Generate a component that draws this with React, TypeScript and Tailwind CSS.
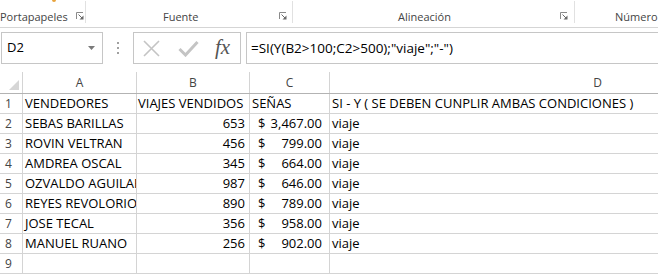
import React from "react";

const data: [string, string, string, string][] = [
  ["SEBAS BARILLAS", "653", "3,467.00", "viaje"],
  ["ROVIN VELTRAN", "456", "799.00", "viaje"],
  ["AMDREA OSCAL", "345", "664.00", "viaje"],
  ["OZVALDO AGUILAR", "987", "646.00", "viaje"],
  ["REYES REVOLORIO", "890", "789.00", "viaje"],
  ["JOSE TECAL", "356", "958.00", "viaje"],
  ["MANUEL RUANO", "256", "902.00", "viaje"],
];

function Launcher() {
  return (
    <svg width="8" height="8" viewBox="0 0 8 8" className="block">
      <path d="M0.5 7V0.5H7" fill="none" stroke="#8a8a8a" strokeWidth="1" />
      <path d="M2.5 2.5L6.5 6.5" stroke="#6a6a6a" strokeWidth="1" />
      <path d="M7.5 3.5V7.5H3.5Z" fill="#6a6a6a" />
    </svg>
  );
}

function RowHead({ n }: { n: string }) {
  return (
    <div className="w-[23px] shrink-0 h-full border-r border-[#d4d4d4] flex items-center pl-[5px] text-[12px] text-[#444]">
      {n}
    </div>
  );
}

export default function App() {
  return (
    <div className="w-[658px] h-[274px] overflow-hidden bg-white relative font-['Open_Sans',sans-serif] text-black">
      {/* Ribbon */}
      <div className="h-[28px] border-b border-[#d5d5d5] flex text-[11px] text-[#444] relative">
        <div className="absolute left-[52px] top-0 w-[4px] h-[2px] rounded-b bg-[#e8a33d]" />
        <div className="w-[87px] shrink-0 flex items-end pb-[4px]">
          <div className="h-[22px] flex items-end w-[86px] border-r border-[#e1e1e1]">
            <span className="leading-[14px] mb-[-1px]">Portapapeles</span>
            <span className="ml-[8px] mb-[3px]"><Launcher /></span>
          </div>
        </div>
        <div className="w-[206px] shrink-0 flex items-end pb-[4px]">
          <div className="h-[22px] flex items-end w-[206px] border-r border-[#e1e1e1]">
            <span className="leading-[14px] mb-[-1px] ml-[76px]">Fuente</span>
            <span className="ml-[81px] mb-[3px]"><Launcher /></span>
          </div>
        </div>
        <div className="w-[282px] shrink-0 flex items-end pb-[4px]">
          <div className="h-[22px] flex items-end w-[282px] border-r border-[#e1e1e1]">
            <span className="leading-[14px] mb-[-1px] ml-[105px]">Alineación</span>
            <span className="ml-[109px] mb-[3px]"><Launcher /></span>
          </div>
        </div>
        <div className="flex-1 flex items-end pb-[4px]">
          <span className="leading-[14px] mb-[-1px] ml-[40px]">Número</span>
        </div>
      </div>

      {/* Formula bar */}
      <div className="h-[44px] pt-[4px] flex items-start">
        <div className="ml-[1px] w-[102px] h-[32px] border border-[#c6c6c6] flex items-center justify-between pl-[5px] pr-[7px] text-[13px]">
          <span>D2</span>
          <svg width="7" height="4" viewBox="0 0 7 4"><path d="M0 0H7L3.5 4Z" fill="#7a7a7a" /></svg>
        </div>
        <div className="w-[30px] h-[32px] flex flex-col items-center justify-center gap-[3px]">
          <div className="w-[2px] h-[2px] bg-[#a0a0a0]" />
          <div className="w-[2px] h-[2px] bg-[#a0a0a0]" />
          <div className="w-[2px] h-[2px] bg-[#a0a0a0]" />
        </div>
        <div className="w-[108px] h-[32px] border border-[#c6c6c6] flex items-center pl-[9px] gap-[18px]">
          <svg width="17" height="17" viewBox="0 0 17 17">
            <path d="M1 1L16 16M16 1L1 16" stroke="#c4c4c4" strokeWidth="1.6" />
          </svg>
          <svg width="21" height="17" viewBox="0 0 21 17">
            <path d="M1.5 9L7.5 15L19.5 2" fill="none" stroke="#c4c4c4" strokeWidth="3" />
          </svg>
          <span className="font-['Liberation_Serif',serif] italic text-[21px] text-[#555] leading-none -ml-[2px] -mt-[2px]">fx</span>
        </div>
        <div className="ml-[5px] flex-1 h-[32px] border-y border-l border-[#c6c6c6] flex items-center pl-[4px] text-[13.5px]">
          =SI(Y(B2&gt;100;C2&gt;500);"viaje";"-")
        </div>
      </div>

      {/* Grid */}
      <div className="text-[13px]">
        {/* header */}
        <div className="h-[22px] flex border-b border-[#b3b3b3] text-[12px] text-[#444]">
          <div className="w-[23px] shrink-0 h-full border-r border-[#d4d4d4] relative">
            <svg width="10" height="10" viewBox="0 0 10 10" className="absolute right-[3px] bottom-[3px]">
              <path d="M10 0V10H0Z" fill="#d6d6d6" />
            </svg>
          </div>
          <div className="w-[114px] shrink-0 border-r border-[#d4d4d4] flex items-center justify-center">A</div>
          <div className="w-[113px] shrink-0 border-r border-[#d4d4d4] flex items-center justify-center">B</div>
          <div className="w-[80px] shrink-0 border-r border-[#d4d4d4] flex items-center justify-center">C</div>
          <div className="w-[535px] shrink-0 flex items-center justify-center">D</div>
        </div>
        {/* row 1 */}
        <div className="h-[20px] flex border-b border-[#d4d4d4]">
          <RowHead n="1" />
          <div className="w-[114px] shrink-0 border-r border-[#d4d4d4] flex items-center pl-[2px] whitespace-nowrap overflow-hidden">VENDEDORES</div>
          <div className="w-[113px] shrink-0 border-r border-[#d4d4d4] flex items-center pl-[1px] whitespace-nowrap overflow-hidden">VIAJES VENDIDOS</div>
          <div className="w-[80px] shrink-0 border-r border-[#d4d4d4] flex items-center pl-[2px] whitespace-nowrap overflow-hidden">SEÑAS</div>
          <div className="w-[535px] shrink-0 flex items-center pl-[2px] whitespace-nowrap overflow-hidden">SI - Y ( SE DEBEN CUNPLIR AMBAS CONDICIONES )</div>
        </div>
        {data.map((r, i) => (
          <div key={i} className="h-[20px] flex border-b border-[#d4d4d4]">
            <RowHead n={String(i + 2)} />
            <div className="w-[114px] shrink-0 border-r border-[#d4d4d4] flex items-center pl-[2px] whitespace-nowrap overflow-hidden">{r[0]}</div>
            <div className="w-[113px] shrink-0 border-r border-[#d4d4d4] flex items-center justify-end pr-[4px] whitespace-nowrap overflow-hidden">{r[1]}</div>
            <div className="w-[80px] shrink-0 border-r border-[#d4d4d4] flex items-center justify-between pl-[8px] pr-[7px] whitespace-nowrap overflow-hidden">
              <span>$</span>
              <span>{r[2]}</span>
            </div>
            <div className="w-[535px] shrink-0 flex items-center pl-[2px] whitespace-nowrap overflow-hidden">{r[3]}</div>
          </div>
        ))}
        <div className="h-[20px] flex border-b border-[#d4d4d4]">
          <RowHead n="9" />
          <div className="w-[114px] shrink-0 border-r border-[#d4d4d4]" />
          <div className="w-[113px] shrink-0 border-r border-[#d4d4d4]" />
          <div className="w-[80px] shrink-0 border-r border-[#d4d4d4]" />
          <div className="w-[535px] shrink-0" />
        </div>
      </div>
    </div>
  );
}
